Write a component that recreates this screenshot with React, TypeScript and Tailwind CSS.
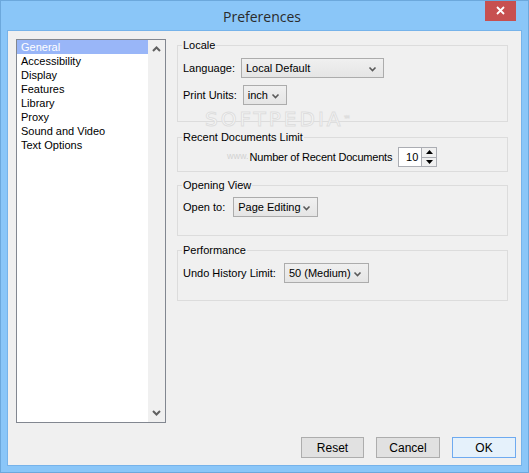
import React from "react";

const items = [
  "General",
  "Accessibility",
  "Display",
  "Features",
  "Library",
  "Proxy",
  "Sound and Video",
  "Text Options",
];

function Chevron({ className = "" }: { className?: string }) {
  return (
    <svg width="9" height="6" viewBox="0 0 9 6" className={className}>
      <path d="M1.5 1.5 L4.5 4.5 L7.5 1.5" fill="none" stroke="#5a5a5a" strokeWidth="1.6" />
    </svg>
  );
}

function Combo({ value, width }: { value: string; width: string }) {
  return (
    <div
      className={`${width} h-[20px] flex items-center justify-between whitespace-nowrap border border-[#acacac] bg-gradient-to-b from-[#f0f0f0] to-[#e5e5e5] pl-[4px] pr-[6px]`}
    >
      <span>{value}</span>
      <Chevron className="mt-[2px] shrink-0" />
    </div>
  );
}

function Group({
  title,
  height,
  className = "",
  children,
}: {
  title: string;
  height: string;
  className?: string;
  children: React.ReactNode;
}) {
  return (
    <fieldset className={`${height} ${className} border border-[#dcdcdc] px-[5px]`}>
      <legend className="px-[1px] -ml-[1px] leading-[14px]">{title}</legend>
      {children}
    </fieldset>
  );
}

export default function App() {
  return (
    <div className="w-[529px] h-[473px] bg-[#8ac6f8] border border-[#6ca8dc] flex flex-col font-['Liberation_Sans',Arial,sans-serif] text-[11px] text-black overflow-hidden">
      {/* TITLE BAR */}
      <div className="h-[29px] grid grid-cols-[1fr_auto_1fr]">
        <div />
        <div className="pt-[5px] pr-[5px] text-[14px] text-[#2b2b2b] font-['Open_Sans',sans-serif]">
          Preferences
        </div>
        <div className="flex justify-end items-start">
          <div className="mr-[12px] -mt-[1px] w-[31px] h-[21px] bg-[#c75050] flex items-center justify-center">
            <svg width="9" height="9" viewBox="0 0 9 9">
              <path d="M1 1 L8 8 M8 1 L1 8" stroke="#fff" strokeWidth="1.8" />
            </svg>
          </div>
        </div>
      </div>

      {/* CLIENT AREA */}
      <div className="relative flex-1 mx-[6px] mb-[6px] border border-[#76b3ea] bg-[#f0f0f0] flex flex-col">
        {/* WATERMARK */}
        <div className="absolute left-[197px] top-[80px] pointer-events-none leading-[16px] text-[20px] tracking-[3px] text-white/70 [-webkit-text-stroke:1px_#dedede] font-['DejaVu_Sans',sans-serif]">
          SOFTPEDIA<span className="text-[7px] align-top">™</span>
        </div>

        <div className="flex pl-[8px] pt-[7px]">
          {/* LIST BOX */}
          <div className="mt-[1px] w-[150px] h-[384px] border border-[#828790] bg-white flex">
            <div className="flex-1 flex flex-col">
              {items.map((item, i) => (
                <div
                  key={item}
                  className={`h-[14px] leading-[14px] pl-[4px] ${
                    i === 0 ? "bg-[#99b6f8] text-white" : ""
                  }`}
                >
                  {item}
                </div>
              ))}
            </div>
            <div className="w-[17px] bg-[#f0f0f0] flex flex-col items-center justify-between pt-[6px] pb-[6px]">
              <svg width="9" height="6" viewBox="0 0 9 6">
                <path d="M1 5 L4.5 1.5 L8 5" fill="none" stroke="#606060" strokeWidth="2" />
              </svg>
              <svg width="9" height="6" viewBox="0 0 9 6">
                <path d="M1 1 L4.5 4.5 L8 1" fill="none" stroke="#606060" strokeWidth="2" />
              </svg>
            </div>
          </div>

          {/* RIGHT SIDE */}
          <div className="ml-[11px] w-[331px] flex flex-col">
            <Group title="Locale" height="h-[84px]">
              <div className="pt-[6px] flex flex-col gap-[7px]">
                <div className="flex items-center gap-[6px]">
                  <span>Language:</span>
                  <Combo value="Local Default" width="w-[143px]" />
                </div>
                <div className="flex items-center gap-[6px]">
                  <span>Print Units:</span>
                  <Combo value="inch" width="w-[44px]" />
                </div>
              </div>
            </Group>

            <Group title="Recent Documents Limit" height="h-[42px]" className="mt-[8px]">
              <div className="pt-[3px] pl-[44px] flex items-center gap-[6px]">
                <div className="flex items-center gap-[1px]">
                  <span className="text-[9px] text-[#d2d2d2]">www.</span>
                  <span className="tracking-[-0.2px]">Number of Recent Documents</span>
                </div>
                <div className="w-[39px] h-[20px] border border-[#abadb3] bg-white flex">
                  <div className="flex-1 flex items-center justify-end pr-[3px]">10</div>
                  <div className="w-[15px] flex flex-col border-l border-[#abadb3] bg-[#f0f0f0]">
                    <div className="flex-1 flex items-center justify-center border-b border-[#abadb3]">
                      <svg width="7" height="4" viewBox="0 0 7 4">
                        <path d="M0 4 L3.5 0 L7 4 Z" fill="#000" />
                      </svg>
                    </div>
                    <div className="flex-1 flex items-center justify-center">
                      <svg width="7" height="4" viewBox="0 0 7 4">
                        <path d="M0 0 L3.5 4 L7 0 Z" fill="#000" />
                      </svg>
                    </div>
                  </div>
                </div>
              </div>
            </Group>

            <Group title="Opening View" height="h-[58px]" className="mt-[6px]">
              <div className="pt-[5px] flex items-center gap-[8px]">
                <span>Open to:</span>
                <Combo value="Page Editing" width="w-[85px]" />
              </div>
            </Group>

            <Group title="Performance" height="h-[58px]" className="mt-[7px]">
              <div className="pt-[6px] flex items-center gap-[8px]">
                <span>Undo History Limit:</span>
                <Combo value="50 (Medium)" width="w-[85px]" />
              </div>
            </Group>
          </div>
        </div>

        {/* BUTTONS */}
        <div className="mt-[14px] pr-[5px] flex justify-end gap-[12px] text-[12px]">
          <button className="w-[63px] h-[21px] border border-[#adadad] bg-[#e1e1e1]">Reset</button>
          <button className="w-[64px] h-[21px] border border-[#adadad] bg-[#e1e1e1]">Cancel</button>
          <button className="w-[64px] h-[21px] border border-[#6eaaf0] bg-[#e5f1fb]">OK</button>
        </div>
      </div>
    </div>
  );
}
